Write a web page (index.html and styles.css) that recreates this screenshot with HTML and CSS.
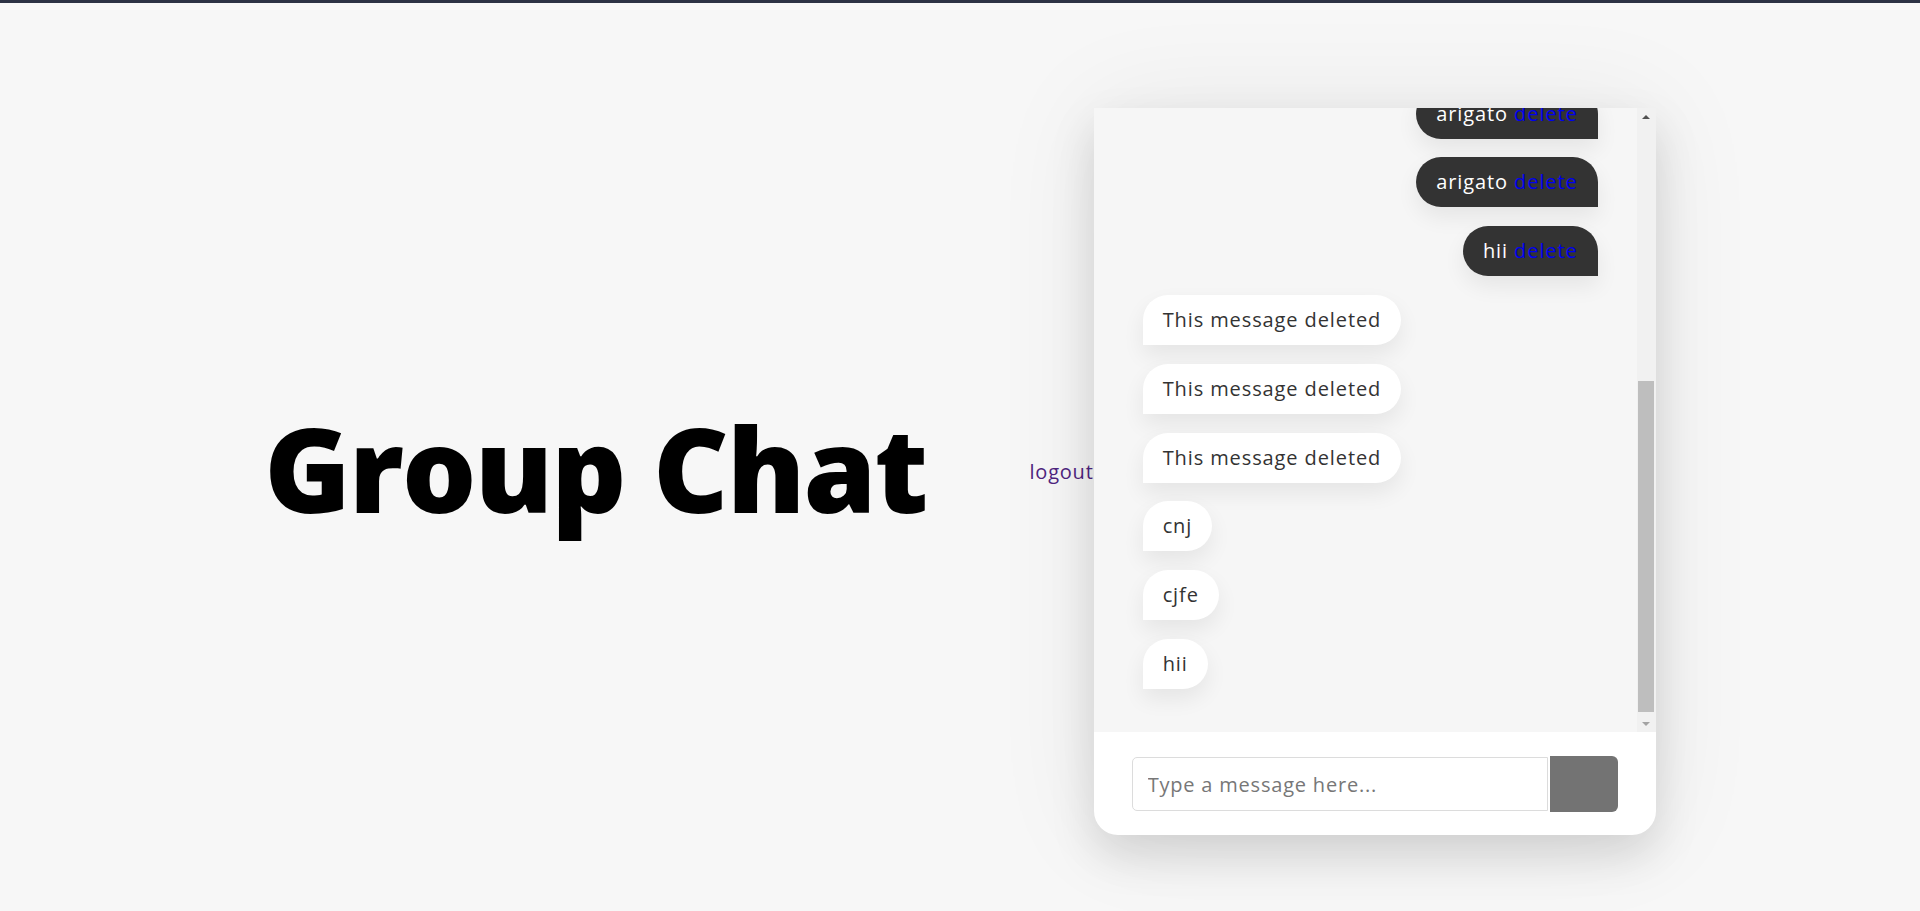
FILE: index.html
```html
<!DOCTYPE html>
<html lang="en">
<head>
<meta charset="utf-8">
<title>Group Chat</title>
<link rel="stylesheet" href="styles.css">
</head>
<body>
<div class="topbar"></div>
<main class="page">
  <h1 class="title">Group Chat</h1>
  <a class="logout" href="#">logout</a>
  <section class="chat">
    <div class="messages">
      <div class="viewport">
        <div class="list">
          <div class="msg mine">arigato <a class="del" href="#">delete</a></div>
          <div class="msg mine">arigato <a class="del" href="#">delete</a></div>
          <div class="msg mine">hii <a class="del" href="#">delete</a></div>
          <div class="msg theirs">This message deleted</div>
          <div class="msg theirs">This message deleted</div>
          <div class="msg theirs">This message deleted</div>
          <div class="msg theirs">cnj</div>
          <div class="msg theirs">cjfe</div>
          <div class="msg theirs">hii</div>
        </div>
      </div>
      <div class="scrollbar">
        <div class="arrow">
          <svg width="8" height="4" viewBox="0 0 8 4"><polygon points="0,4 4,0 8,4" fill="#505050"/></svg>
        </div>
        <div class="track">
          <div class="thumb"></div>
        </div>
        <div class="arrow">
          <svg width="8" height="4" viewBox="0 0 8 4"><polygon points="0,0 8,0 4,4" fill="#a3a3a3"/></svg>
        </div>
      </div>
    </div>
    <form class="composer">
      <input class="field" type="text" placeholder="Type a message here...">
      <button class="send" type="button"></button>
    </form>
  </section>
</main>
</body>
</html>
```

FILE: styles.css
```css
html, body {
  margin: 0;
  padding: 0;
}

body {
  background: #f7f7f7;
  font-family: "Open Sans", "Liberation Sans", sans-serif;
  height: 911px;
  overflow: hidden;
}

.topbar {
  height: 3px;
  background: #2c3244;
}

.page {
  display: flex;
  align-items: center;
  justify-content: center;
  padding-top: 105px;
}

.title {
  margin: 0 103px 8px 0;
  font-size: 117px;
  font-weight: 800;
  line-height: 1;
  color: #000;
  letter-spacing: -1.9px;
}

.logout {
  font-size: 20px;
  color: #4f2580;
  text-decoration: none;
  letter-spacing: 0.8px;
}

.chat {
  width: 562px;
  background: #fff;
  border-radius: 0 0 24px 24px;
  box-shadow: 0 20px 45px rgba(0, 0, 0, 0.13), 0 0 110px rgba(0, 0, 0, 0.07);
}

.messages {
  height: 624px;
  display: flex;
  background: #f6f6f6;
}

.viewport {
  flex: 1;
  overflow: hidden;
  display: flex;
  flex-direction: column-reverse;
}

.list {
  flex-shrink: 0;
  display: flex;
  flex-direction: column;
  gap: 18.8px;
  padding: 10px 39px 43px 49px;
}

.scrollbar {
  width: 19px;
  display: flex;
  flex-direction: column;
  background: #f1f1f1;
}

.arrow {
  height: 17px;
  display: flex;
  align-items: center;
  justify-content: center;
  padding-right: 1px;
}

.track {
  flex: 1;
  display: flex;
  flex-direction: column;
  justify-content: flex-end;
  padding: 0 2px 3px 1px;
}

.thumb {
  height: 331px;
  background: #bebebe;
}

.msg {
  height: 50px;
  line-height: 50px;
  padding: 0 20px;
  font-size: 20px;
  letter-spacing: 0.9px;
  white-space: nowrap;
  box-shadow: 0 10px 22px rgba(0, 0, 0, 0.07);
}

.theirs {
  align-self: flex-start;
  background: #fff;
  color: #333;
  border-radius: 25px 25px 25px 0;
}

.mine {
  align-self: flex-end;
  background: #333;
  color: #fff;
  border-radius: 25px 25px 0 25px;
}

.del {
  color: #0000ee;
  text-decoration: none;
}

.composer {
  display: flex;
  justify-content: center;
  align-items: center;
  gap: 2px;
  padding: 24px 0 23px;
  margin: 0;
}

.field {
  box-sizing: border-box;
  width: 416px;
  height: 54px;
  padding: 0 15px;
  border: 1px solid #dcdcdc;
  border-radius: 5px 0 0 5px;
  font-family: "Open Sans", "Liberation Sans", sans-serif;
  font-size: 20px;
  letter-spacing: 0.8px;
  color: #333;
  background: #fff;
  outline: none;
}

.field::placeholder {
  color: #777;
}

.send {
  width: 68px;
  height: 56px;
  border: none;
  border-radius: 0 6px 6px 0;
  background: #737373;
  padding: 0;
}
```
